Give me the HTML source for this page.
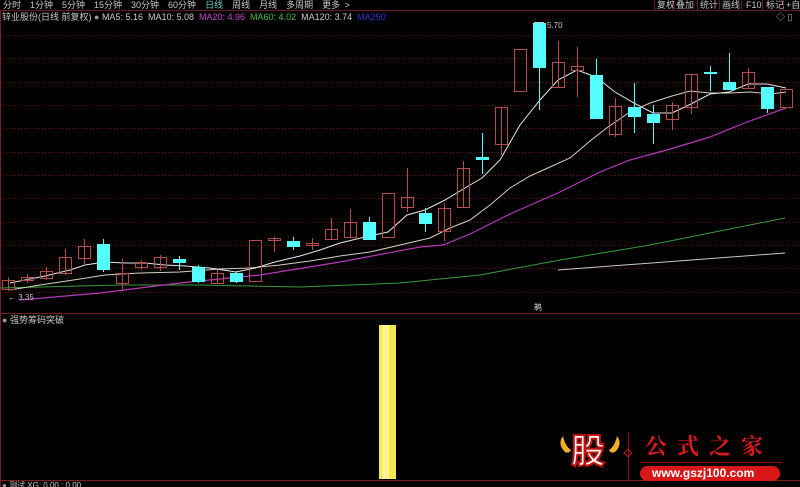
<!DOCTYPE html>
<html><head><meta charset="utf-8"><style>
html,body{margin:0;padding:0;background:#000;width:800px;height:487px;overflow:hidden}
body{position:relative;font-family:"Liberation Sans","Noto Sans CJK SC",sans-serif;color:#c8c8c8}
.t{position:absolute;font-size:9px;white-space:nowrap;line-height:10px}
</style></head><body>
<svg width="800" height="487" style="position:absolute;left:0;top:0">
<g stroke="#601616" stroke-dasharray="1,2" stroke-width="1">
<line x1="0" x2="800" y1="35.5" y2="35.5"/><line x1="0" x2="800" y1="58.5" y2="58.5"/><line x1="0" x2="800" y1="82.5" y2="82.5"/><line x1="0" x2="800" y1="105.5" y2="105.5"/><line x1="0" x2="800" y1="128.5" y2="128.5"/><line x1="0" x2="800" y1="152.5" y2="152.5"/><line x1="0" x2="800" y1="175.5" y2="175.5"/><line x1="0" x2="800" y1="198.5" y2="198.5"/><line x1="0" x2="800" y1="222.5" y2="222.5"/><line x1="0" x2="800" y1="245.5" y2="245.5"/><line x1="0" x2="800" y1="268.5" y2="268.5"/><line x1="0" x2="800" y1="292.5" y2="292.5"/>
</g>
<line x1="0" x2="800" y1="10.5" y2="10.5" stroke="#6a1a1a"/>
<line x1="0" x2="800" y1="313.5" y2="313.5" stroke="#7a1e1e"/>
<line x1="0" x2="800" y1="480.5" y2="480.5" stroke="#7a1e1e"/>
<line x1="0.5" x2="0.5" y1="10" y2="487" stroke="#7a1e1e"/>
<g stroke="#6a1a1a"><line x1="654.5" x2="654.5" y1="0" y2="10"/><line x1="672.5" x2="672.5" y1="0" y2="10"/><line x1="697.5" x2="697.5" y1="0" y2="10"/><line x1="719.5" x2="719.5" y1="0" y2="10"/><line x1="741.5" x2="741.5" y1="0" y2="10"/><line x1="762.5" x2="762.5" y1="0" y2="10"/><line x1="783.5" x2="783.5" y1="0" y2="10"/></g>
<polyline fill="none" stroke="#3a9a3a" stroke-width="1" points="0,288 120,285 200,285 300,287 400,283 480,275 560,260 650,245 785,218"/>
<polyline fill="none" stroke="#c9c9c9" stroke-width="1" points="558,270 785,253"/>
<polyline fill="none" stroke="#b838b8" stroke-width="1.2" points="20,300 100,293 180,283 260,275 340,262 420,247 443,245 470,234 510,214 560,192 600,172 630,160 667,150 710,137 747,122 786,108"/>
<polyline fill="none" stroke="#d8d0c0" stroke-width="1" points="10,290 40,285 80,279 105,275 140,273 180,272 220,269 250,268 280,265 310,261 340,256 370,252 400,245 430,238 450,228 470,220 490,205 510,188 530,176 550,167 570,158 590,141 608,127 630,112 650,103 672,96 690,91 710,93 730,93 750,92 770,94 786,92"/>
<polyline fill="none" stroke="#e8e8e8" stroke-width="1" points="10,283 45,276 70,270 85,265 105,262 125,263 145,263 165,265 185,266 210,268 236,272 255,268 275,262 300,256 320,250 340,243 365,237 388,232 407,215 425,210 445,200 465,188 482,178 500,160 520,125 540,100 558,80 577,70 596,77 615,92 634,103 653,113 672,113 691,104 710,94 729,92 748,84 767,84 786,88"/>
<g stroke="#b84a4a" fill="none" stroke-width="1">
<line x1="8.5" x2="8.5" y1="277" y2="291"/><rect x="2.5" y="280.5" width="12" height="9"/>
<line x1="27.5" x2="27.5" y1="274" y2="283"/><rect x="21.5" y="277.5" width="12" height="3"/>
<line x1="46.5" x2="46.5" y1="267" y2="280"/><rect x="40.5" y="271.5" width="12" height="7"/>
<line x1="65.5" x2="65.5" y1="249" y2="275"/><rect x="59.5" y="257.5" width="12" height="16"/>
<line x1="84.5" x2="84.5" y1="239" y2="264"/><rect x="78.5" y="246.5" width="12" height="12"/>
<line x1="122.5" x2="122.5" y1="259" y2="291"/><rect x="116.5" y="273.5" width="12" height="10"/>
<line x1="141.5" x2="141.5" y1="260" y2="270"/><rect x="135.5" y="263.5" width="12" height="4"/>
<line x1="160.5" x2="160.5" y1="255" y2="271"/><rect x="154.5" y="257.5" width="12" height="10"/>
<line x1="217.5" x2="217.5" y1="270" y2="284"/><rect x="211.5" y="273.5" width="12" height="10"/>
<rect x="249.5" y="240.5" width="12" height="41"/>
<line x1="274.5" x2="274.5" y1="237" y2="252"/><rect x="268.5" y="238.5" width="12" height="2"/>
<line x1="312.5" x2="312.5" y1="238" y2="250"/><rect x="306.5" y="243.5" width="12" height="2"/>
<line x1="331.5" x2="331.5" y1="218" y2="239"/><rect x="325.5" y="229.5" width="12" height="10"/>
<line x1="350.5" x2="350.5" y1="209" y2="237"/><rect x="344.5" y="222.5" width="12" height="15"/>
<rect x="382.5" y="193.5" width="12" height="44"/>
<line x1="407.5" x2="407.5" y1="168" y2="212"/><rect x="401.5" y="197.5" width="12" height="10"/>
<line x1="444.5" x2="444.5" y1="203" y2="241"/><rect x="438.5" y="208.5" width="12" height="23"/>
<line x1="463.5" x2="463.5" y1="161" y2="207"/><rect x="457.5" y="168.5" width="12" height="39"/>
<line x1="501.5" x2="501.5" y1="107" y2="155"/><rect x="495.5" y="107.5" width="12" height="37"/>
<rect x="514.5" y="49.5" width="12" height="42"/>
<line x1="558.5" x2="558.5" y1="41" y2="87"/><rect x="552.5" y="62.5" width="12" height="25"/>
<line x1="577.5" x2="577.5" y1="47" y2="97"/><rect x="571.5" y="66.5" width="12" height="4"/>
<line x1="615.5" x2="615.5" y1="98" y2="137"/><rect x="609.5" y="106.5" width="12" height="28"/>
<line x1="672.5" x2="672.5" y1="102" y2="130"/><rect x="666.5" y="105.5" width="12" height="14"/>
<line x1="691.5" x2="691.5" y1="74" y2="114"/><rect x="685.5" y="74.5" width="12" height="33"/>
<line x1="748.5" x2="748.5" y1="68" y2="88"/><rect x="742.5" y="72.5" width="12" height="16"/>
<rect x="780.5" y="89.5" width="12" height="18"/>
</g>
<g fill="#54ffff" stroke="#54ffff" stroke-width="1">
<line x1="103.5" x2="103.5" y1="239" y2="272"/><rect x="97.5" y="244.5" width="12" height="25"/>
<line x1="179.5" x2="179.5" y1="256" y2="270"/><rect x="173.5" y="259.5" width="12" height="3"/>
<line x1="198.5" x2="198.5" y1="265" y2="283"/><rect x="192.5" y="267.5" width="12" height="14"/>
<line x1="236.5" x2="236.5" y1="271" y2="283"/><rect x="230.5" y="273.5" width="12" height="8"/>
<line x1="293.5" x2="293.5" y1="237" y2="250"/><rect x="287.5" y="241.5" width="12" height="5"/>
<line x1="369.5" x2="369.5" y1="217" y2="240"/><rect x="363.5" y="222.5" width="12" height="17"/>
<line x1="425.5" x2="425.5" y1="208" y2="232"/><rect x="419.5" y="213.5" width="12" height="10"/>
<line x1="482.5" x2="482.5" y1="133" y2="174"/><rect x="476.5" y="157.5" width="12" height="2"/>
<line x1="539.5" x2="539.5" y1="23" y2="110"/><rect x="533.5" y="23.5" width="12" height="44"/>
<line x1="596.5" x2="596.5" y1="59" y2="118"/><rect x="590.5" y="75.5" width="12" height="43"/>
<line x1="634.5" x2="634.5" y1="83" y2="133"/><rect x="628.5" y="107.5" width="12" height="9"/>
<line x1="653.5" x2="653.5" y1="105" y2="144"/><rect x="647.5" y="114.5" width="12" height="8"/>
<line x1="710.5" x2="710.5" y1="66" y2="91"/><rect x="704.5" y="72.5" width="12" height="1"/>
<line x1="729.5" x2="729.5" y1="53" y2="89"/><rect x="723.5" y="82.5" width="12" height="7"/>
<line x1="767.5" x2="767.5" y1="87" y2="113"/><rect x="761.5" y="87.5" width="12" height="21"/>
</g>
<line x1="534" x2="544" y1="22.5" y2="22.5" stroke="#ccc"/>
<rect x="379" y="325" width="17" height="154" fill="#f2e84a"/>
<rect x="382" y="325" width="7" height="154" fill="#faf590"/>
<line x1="628.5" x2="628.5" y1="432" y2="480" stroke="#8a1010"/>
<polygon points="628,449 632,453 628,457 624,453" fill="none" stroke="#b02020"/>
<line x1="640" x2="782" y1="462.5" y2="462.5" stroke="#8a1010"/>
<rect x="640" y="466" width="140" height="15" rx="7.5" fill="#d81818"/>
<path d="M563,436 q-6,8 2,16 q4,2 6,-2 q-6,-4 -8,-14z" fill="#f2b020"/>
<path d="M617,436 q6,8 -2,16 q-4,2 -6,-2 q6,-4 8,-14z" fill="#f2b020"/>
</svg>
<div class="t" style="left:3px;top:0;color:#c8c8c8;word-spacing:2px">分时&nbsp; 1分钟&nbsp; 5分钟&nbsp; 15分钟&nbsp; 30分钟&nbsp; 60分钟&nbsp; <span style="color:#6cc">日线</span>&nbsp; 周线&nbsp; 月线&nbsp; 多周期&nbsp; 更多 &gt;</div>
<div class="t" style="left:657px;top:0">复权</div><div class="t" style="left:676px;top:0">叠加</div><div class="t" style="left:700px;top:0">统计</div><div class="t" style="left:722px;top:0">画线</div><div class="t" style="left:746px;top:0">F10</div><div class="t" style="left:766px;top:0">标记</div><div class="t" style="left:786px;top:0">+自</div>
<div class="t" style="left:2px;top:12px">锌业股份(日线 前复权) <span style="color:#999">●</span> MA5: 5.16&nbsp; MA10: 5.08&nbsp; <span style="color:#d040d0">MA20: 4.96</span>&nbsp; <span style="color:#40c040">MA60: 4.02</span>&nbsp; MA120: 3.74&nbsp; <span style="color:#3030d0">MA250:</span></div>
<div class="t" style="left:776px;top:12px;color:#aaa">◇ ▯</div>
<div class="t" style="left:547px;top:21px;font-size:8px">5.70</div>
<div class="t" style="left:8px;top:293px;font-size:8px">← 3.35</div>
<div class="t" style="left:534px;top:303px;font-size:8px;color:#ddd">鹈</div>
<div class="t" style="left:2px;top:315px"><span style="color:#999">●</span> 强势筹码突破</div>
<div class="t" style="left:2px;top:481px;font-size:8px"><span style="color:#999">●</span> 测试 XG: 0.00 : 0.00</div>
<div class="t" style="left:571px;top:432px;font-size:34px;line-height:40px;font-weight:bold;color:#fff;-webkit-text-stroke:2px #c01010">股</div>
<div class="t" style="left:645px;top:433px;font-size:22px;line-height:26px;color:#e01818;letter-spacing:10px;font-family:'Noto Serif CJK SC',serif;font-weight:bold">公式之家</div>
<div class="t" style="left:652px;top:467px;font-size:12px;line-height:13px;color:#fff;font-weight:bold">www.gszj100.com</div>
</body></html>
